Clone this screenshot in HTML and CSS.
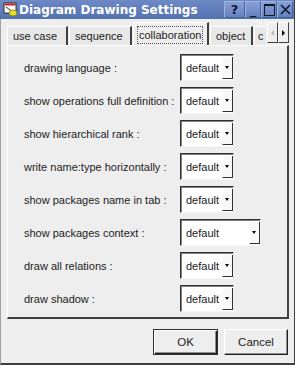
FILE: index.html
```html
<!DOCTYPE html>
<html lang="en">
<head>
    <meta charset="UTF-8">
    <meta name="viewport" content="width=device-width, initial-scale=1.0">
    <title>Diagram Drawing Settings</title>
    <link rel="stylesheet" href="styles.css">
</head>
<body>
    <div class="dialog">
        <div class="titlebar">
            <svg class="app-icon" width="15" height="15" viewBox="0 0 15 15">
                <rect x="1" y="1" width="12" height="10" fill="#fff" stroke="#333" stroke-width="1"/>
                <rect x="1.5" y="1.5" width="11" height="2" fill="#d02020"/>
                <line x1="3" y1="5" x2="10" y2="10" stroke="#222" stroke-width="1"/>
                <ellipse cx="10" cy="11" rx="4" ry="3" fill="#e8e020" stroke="#7a7a10" stroke-width="0.8"/>
            </svg>
            <span class="title">Diagram Drawing Settings</span>
            <div class="win-buttons">
                <span class="win-btn help">?</span>
                <span class="win-btn">_</span>
                <span class="win-btn"><span class="max-box"></span></span>
                <span class="win-btn">
                    <svg width="11" height="11" viewBox="0 0 11 11"><path d="M1 1 L10 10 M10 1 L1 10" stroke="#101830" stroke-width="1.6"/></svg>
                </span>
            </div>
        </div>

        <div class="content">
            <div class="tabs">
                <div class="tab">use case</div>
                <div class="tab">sequence</div>
                <div class="tab selected"><span class="focus">collaboration</span></div>
                <div class="tab">object</div>
                <div class="tab cut">c</div>
                <div class="tab-scroll">
                    <span class="scroll-btn disabled">
                        <svg width="4" height="6" viewBox="0 0 4 6"><path d="M3 0 L0 3 L3 6 Z" fill="#b8b8b8"/></svg>
                    </span>
                    <span class="scroll-btn">
                        <svg width="4" height="6" viewBox="0 0 4 6"><path d="M0 0 L3 3 L0 6 Z" fill="#000"/></svg>
                    </span>
                </div>
            </div>

            <div class="panel">
                <div class="row">
                    <label>drawing language :</label>
                    <div class="combo"><span class="value">default</span><span class="arrow"></span></div>
                </div>
                <div class="row">
                    <label>show operations full definition :</label>
                    <div class="combo"><span class="value">default</span><span class="arrow"></span></div>
                </div>
                <div class="row">
                    <label>show hierarchical rank :</label>
                    <div class="combo"><span class="value">default</span><span class="arrow"></span></div>
                </div>
                <div class="row">
                    <label>write name:type horizontally :</label>
                    <div class="combo"><span class="value">default</span><span class="arrow"></span></div>
                </div>
                <div class="row">
                    <label>show packages name in tab :</label>
                    <div class="combo"><span class="value">default</span><span class="arrow"></span></div>
                </div>
                <div class="row">
                    <label>show packages context :</label>
                    <div class="combo wide"><span class="value">default</span><span class="arrow"></span></div>
                </div>
                <div class="row">
                    <label>draw all relations :</label>
                    <div class="combo"><span class="value">default</span><span class="arrow"></span></div>
                </div>
                <div class="row">
                    <label>draw shadow :</label>
                    <div class="combo"><span class="value">default</span><span class="arrow"></span></div>
                </div>
            </div>

            <div class="actions">
                <button class="btn default">OK</button>
                <button class="btn">Cancel</button>
            </div>
        </div>
    </div>
</body>
</html>
```

FILE: styles.css
```css
/* General styling */
body {
    margin: 0;
    font-family: "Liberation Sans", Arial, sans-serif;
    font-size: 11px;
    color: #222;
    background-color: #eeeeee;
}

.dialog {
    width: 295px;
    height: 365px;
    box-sizing: border-box;
    border-left: 1px solid #a0a0a0;
    border-right: 1px solid #404040;
    border-bottom: 2px solid #404040;
    background-color: #eeeeee;
    display: flex;
    flex-direction: column;
}

/* Title bar */
.titlebar {
    height: 19px;
    display: flex;
    align-items: center;
    background: linear-gradient(#6d8ac6, #5471b0);
    color: #fff;
    margin-left: -1px;
}

.app-icon {
    margin-left: 3px;
    margin-right: 1px;
}

.title {
    font-family: "DejaVu Sans", sans-serif;
    font-weight: bold;
    font-size: 12px;
    flex: 1;
}

.win-buttons {
    display: flex;
    height: 19px;
    margin-right: 1px;
}

.win-btn {
    width: 16px;
    height: 17px;
    margin-top: 1px;
    border: 1px solid #9fb3e0;
    border-right-color: #46609a;
    border-bottom-color: #46609a;
    box-sizing: border-box;
    background: linear-gradient(#86a0d6, #6581bf);
    color: #101830;
    font-family: "DejaVu Sans", sans-serif;
    font-weight: bold;
    font-size: 13px;
    display: flex;
    align-items: center;
    justify-content: center;
    line-height: 1;
}

.win-btn.help {
    width: 21px;
}

.max-box {
    width: 9px;
    height: 9px;
    border: 1.5px solid #101830;
    border-top-width: 2px;
}

/* Content */
.content {
    flex: 1;
    display: flex;
    flex-direction: column;
    padding: 3px 5px 0 6px;
}

.tabs {
    display: flex;
    align-items: flex-end;
    height: 23px;
}

.tab {
    height: 19px;
    padding: 0 5px;
    display: flex;
    align-items: center;
    border-left: 1px solid #ffffff;
    border-top: 1px solid #ffffff;
    border-right: 2px solid #404040;
    box-sizing: border-box;
    background-color: #e8e8e8;
    margin-right: 1px;
}

.tab:first-child {
    width: 61px;
}

.tab:nth-child(2) {
    width: 63px;
}

.tab.selected {
    width: 76px;
    height: 24px;
    padding: 0 3px;
    background-color: #eeeeee;
    margin-bottom: -1px;
}

.focus {
    border: 1px dotted #555;
    padding: 2px 1px;
}

.tab:nth-child(4) {
    width: 43px;
}

.tab.cut {
    width: 12px;
    padding: 0 0 0 3px;
    border-right: none;
    overflow: hidden;
}

.tab-scroll {
    display: flex;
    height: 21px;
    align-self: flex-start;
}

.scroll-btn {
    width: 11px;
    border: 1px solid #ffffff;
    border-right-color: #404040;
    border-bottom-color: #404040;
    box-sizing: border-box;
    display: flex;
    align-items: center;
    justify-content: center;
    background-color: #eeeeee;
}

/* Panel */
.panel {
    height: 274px;
    box-sizing: border-box;
    border-left: 1px solid #ffffff;
    border-top: 1px solid #ffffff;
    border-right: 2px solid #404040;
    border-bottom: 2px solid #404040;
    padding: 8px 0 0 16px;
    display: flex;
    flex-direction: column;
    gap: 6px;
}

.row {
    display: grid;
    grid-template-columns: 156px auto;
    align-items: center;
    justify-items: start;
    height: 27px;
}

.combo {
    width: 54px;
    height: 27px;
    box-sizing: border-box;
    background-color: #ffffff;
    border-top: 1px solid #303030;
    border-left: 1px solid #303030;
    border-right: 1px solid #f4f4f4;
    border-bottom: 1px solid #f4f4f4;
    box-shadow: inset 1px 1px 0 #808080;
    display: flex;
    align-items: stretch;
    color: #1a1a1a;
}

.combo.wide {
    width: 81px;
}

.combo .value {
    flex: 1;
    display: flex;
    align-items: center;
    padding-left: 5px;
}

.arrow {
    width: 11px;
    margin: 2px 0 1px 0;
    box-sizing: border-box;
    background-color: #f8f8f8;
    border-left: 1px solid #ffffff;
    border-right: 1px solid #303030;
    border-bottom: 1px solid #303030;
    position: relative;
}

.arrow::after {
    content: "";
    position: absolute;
    left: 2px;
    top: 9px;
    border-left: 2.5px solid transparent;
    border-right: 2.5px solid transparent;
    border-top: 3px solid #000;
}

/* Buttons */
.actions {
    display: flex;
    justify-content: flex-end;
    gap: 6px;
    margin-top: 10px;
    padding-right: 1px;
}

.btn {
    width: 64px;
    height: 26px;
    font-family: "Liberation Sans", Arial, sans-serif;
    font-size: 11.5px;
    color: #222;
    background-color: #eeeeee;
    border: 1px solid #ffffff;
    border-right-color: #202020;
    border-bottom-color: #202020;
    box-shadow: inset -1px -1px 0 #909090;
    padding: 0;
}

.btn.default {
    width: 65px;
    border: 1px solid #303030;
    box-shadow: inset 1px 1px 0 #ffffff, inset -1px -1px 0 #202020, inset -2px -2px 0 #909090;
}
```
